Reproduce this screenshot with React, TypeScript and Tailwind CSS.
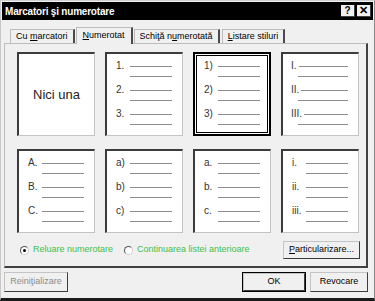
import React from "react";

const Line = ({ className = "" }: { className?: string }) => (
  <div className={"h-px bg-[#8c8c8c] " + className} />
);

function ListCard({
  labels,
  selected,
  roman,
}: {
  labels: string[];
  selected?: boolean;
  roman?: boolean;
}) {
  const groups = (
    <div
      className={
        "flex flex-col " +
        (selected ? "pt-[5px] pl-[7px] pr-[7px]" : roman ? "pt-[7px] pl-[8px] pr-[10px]" : "pt-[7px] pl-[9px] pr-[10px]")
      }
    >
      {labels.map((l) => (
        <div key={l} className="flex flex-col h-[24px]">
          <div className="flex items-center h-[10px]">
            <span
              className={
                "text-[10px] leading-none text-[#333] " +
                (roman ? "mr-[2px]" : "w-[14px] shrink-0")
              }
            >
              {l}
            </span>
            <Line className="flex-1" />
          </div>
          <div className="flex items-center h-[10px]">
            <Line className={"flex-1 " + (roman ? "ml-[7px]" : "ml-[14px]")} />
          </div>
        </div>
      ))}
    </div>
  );
  if (selected) {
    return (
      <div className="w-[78px] h-[84px] border-2 border-black bg-white p-px">
        <div className="w-full h-full border border-black bg-white">{groups}</div>
      </div>
    );
  }
  return (
    <div className="w-[78px] h-[84px] bg-white border-t-2 border-l-2 border-t-[#3c3c3c] border-l-[#3c3c3c] border-r border-b border-r-[#c4c4c4] border-b-[#c4c4c4]">
      {groups}
    </div>
  );
}

function Tab({ children, selected }: { children: React.ReactNode; selected?: boolean }) {
  return (
    <div
      className={
        "flex items-center text-[9px] text-black border-t border-l border-t-[#bcbcbc] border-l-[#bcbcbc] border-r-2 border-r-[#4a4a4a] bg-[#f0f0f0] " +
        (selected
          ? "h-[17px] px-[6px] relative z-10 -mb-px pb-[1px] -mx-[1px]"
          : "h-[14px] px-[5px]")
      }
    >
      <span className="whitespace-pre">{children}</span>
    </div>
  );
}

function Button({
  children,
  className = "",
  def,
  disabled,
}: {
  children: React.ReactNode;
  className?: string;
  def?: boolean;
  disabled?: boolean;
}) {
  const inner = (
    <div
      className={
        "h-full w-full flex items-center justify-center text-[9px] border-t border-l border-t-[#c4c4c4] border-l-[#c4c4c4] border-r border-b border-r-[#3c3c3c] border-b-[#3c3c3c] " +
        (disabled ? "text-[#8a8a8a]" : "text-black")
      }
    >
      {children}
    </div>
  );
  if (def) {
    return <div className={"border border-black " + className}>{inner}</div>;
  }
  return <div className={className}>{inner}</div>;
}

function Radio({ checked, label }: { checked?: boolean; label: string }) {
  return (
    <div className="flex items-center gap-[4px]">
      <div className="w-[9px] h-[9px] rounded-full bg-white border border-t-[#555] border-l-[#555] border-r-[#cfcfcf] border-b-[#cfcfcf] flex items-center justify-center">
        {checked && <div className="w-[3px] h-[3px] rounded-full bg-black" />}
      </div>
      <span className="text-[9px] text-[#3fbf48]">{label}</span>
    </div>
  );
}

export default function App() {
  return (
    <div className="w-[375px] h-[301px] bg-[#f0f0f0] overflow-hidden font-['Liberation_Sans',Arial,sans-serif] border-t border-t-[#d0d0d0] border-l border-l-[#c8c8c8] border-b-[3px] border-b-[#1a1a1a] border-r border-r-[#888]">
      <div className="mt-px ml-px mr-px h-[18px] bg-black flex items-center justify-between pl-[3px] pr-[2px]">
        <span className="text-white font-bold text-[10px] tracking-[-0.2px]">
          Marcatori şi numerotare
        </span>
        <div className="flex gap-[2px]">
          <div className="w-[14px] h-[12px] bg-[#f0f0f0] border-r border-b border-r-[#404040] border-b-[#404040] flex items-center justify-center text-[10px] font-bold leading-none text-black">
            ?
          </div>
          <div className="w-[14px] h-[12px] bg-[#f0f0f0] border-r border-b border-r-[#404040] border-b-[#404040] flex items-center justify-center text-[11px] font-bold leading-none text-black">
            ✕
          </div>
        </div>
      </div>

      <div className="pl-[3px] mt-[7px]">
        <div className="flex items-end pl-[6px] gap-[2px] h-[16px]">
          <Tab>
            {"Cu "}
            <u>m</u>arcatori
          </Tab>
          <Tab selected>
            <u>N</u>umerotat
          </Tab>
          <Tab>
            {"Schiţă n"}
            <u>u</u>merotată
          </Tab>
          <Tab>
            <u>L</u>istare stiluri
          </Tab>
        </div>

        <div className="w-[364px] h-[225px] border-t border-l border-t-[#bcbcbc] border-l-[#bcbcbc] border-r-2 border-b-2 border-r-[#404040] border-b-[#404040] pt-[8px] pl-[12px] flex flex-col">
          <div className="grid grid-cols-[repeat(4,78px)] gap-x-[10px] gap-y-[13px]">
            <div className="w-[78px] h-[84px] bg-white border-t-2 border-l-2 border-t-[#3c3c3c] border-l-[#3c3c3c] border-r border-b border-r-[#c4c4c4] border-b-[#c4c4c4] flex items-center justify-center">
              <span className="text-[13px] text-[#222]">Nici una</span>
            </div>
            <ListCard labels={["1.", "2.", "3."]} />
            <ListCard labels={["1)", "2)", "3)"]} selected />
            <ListCard labels={["I.", "II.", "III."]} roman />
            <ListCard labels={["A.", "B.", "C."]} />
            <ListCard labels={["a)", "b)", "c)"]} />
            <ListCard labels={["a.", "b.", "c."]} />
            <ListCard labels={["i.", "ii.", "iii."]} />
          </div>
          <div className="flex items-center mt-[8px] pl-[3px] pr-[6px]">
            <Radio checked label="Reluare numerotare" />
            <div className="w-[11px]" />
            <Radio label="Continuarea listei anterioare" />
            <div className="flex-1" />
            <Button className="w-[77px] h-[18px]">
              <span>
                <u>P</u>articularizare...
              </span>
            </Button>
          </div>
        </div>

        <div className="flex items-center mt-[4px] pr-[6px]">
          <Button className="w-[64px] h-[20px]" disabled>
            <span>
              Reini<u>ţ</u>ializare
            </span>
          </Button>
          <div className="flex-1" />
          <Button className="w-[64px] h-[20px]" def>
            OK
          </Button>
          <div className="w-[4px]" />
          <Button className="w-[58px] h-[20px]">Revocare</Button>
        </div>
      </div>
    </div>
  );
}
